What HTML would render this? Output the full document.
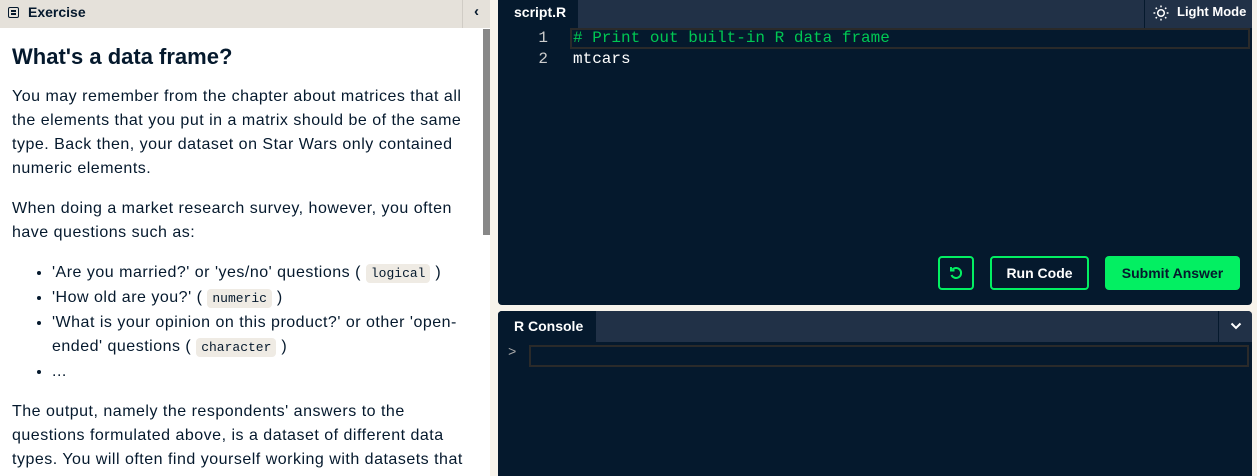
<!DOCTYPE html>
<html><head><meta charset="utf-8"><style>
*{box-sizing:border-box;margin:0;padding:0}
body{width:1257px;height:476px;overflow:hidden;background:#f7f3eb;font-family:"Liberation Sans",sans-serif;position:relative}
.left{position:absolute;left:0;top:0;width:490px;height:476px;background:#fff;overflow:hidden}
.lh{height:28px;background:#e5e1da;position:relative;font-weight:bold;font-size:14px;color:#05192d;line-height:24px}
.lh .t{position:absolute;left:28px;top:0}
.lh .ic{position:absolute;left:8px;top:7px;width:11px;height:11px;border:1.6px solid #05192d;border-radius:2px}
.lh .ic:before{content:"";position:absolute;left:2px;right:2px;top:2px;height:1.5px;background:#05192d}
.lh .ic:after{content:"";position:absolute;left:2px;right:2px;top:5px;height:1.5px;background:#05192d}
.lh .col{position:absolute;left:462px;top:0;width:28px;height:28px;border-left:1px solid #d0ccc5;text-align:center;font-size:15px}
.sb{position:absolute;left:483px;top:29px;width:7px;height:206px;background:#888}
.content{position:absolute;left:12px;top:41px;width:462px;color:#05192d;font-size:16px;line-height:24px;letter-spacing:0.5px}
h1{font-size:22px;line-height:32px;margin-bottom:12px;letter-spacing:0}
p{margin-bottom:16px}
ul{margin:0 0 16px 40px}
li{line-height:24px}
code{font-family:"Liberation Mono",monospace;font-size:13px;background:#efebe4;padding:2px 5px;border-radius:4px;letter-spacing:0}
.ed{position:absolute;left:498px;top:0;width:754px;height:305px;background:#05192d;border-radius:0 0 4px 4px;overflow:hidden}
.tabs{height:28px;background:#213147;position:relative;color:#fff;font-weight:bold;font-size:14px}
.tab{position:absolute;left:0;top:0;width:80px;height:28px;background:#05192d;padding-left:16px;line-height:24px}
.lm{position:absolute;right:0;top:0;width:108px;height:28px;border-left:1px solid #05192d;line-height:24px;font-size:13px;padding-left:32px}
.code{font-family:"Liberation Mono",monospace;font-size:16px;color:#fff;line-height:21px}
.ln{position:absolute;left:30px;top:28px;color:#ccc;text-align:right;width:20px;line-height:21px;font-family:"Liberation Mono",monospace;font-size:16px}
.hl{position:absolute;left:72px;top:28px;width:680px;height:21px;border:2px solid #2a2a2a}
.btn{position:absolute;top:256px;height:34px;border-radius:4px;font-weight:bold;font-size:14px;line-height:30px;text-align:center}
.con{position:absolute;left:498px;top:311px;width:754px;height:165px;background:#05192d;border-radius:4px 4px 0 0;overflow:hidden}
.ch{height:31px;background:#213147;position:relative;color:#fff;font-weight:bold;font-size:14px}
</style></head><body>
<div class="left">
 <div class="lh"><div class="ic"></div><span class="t">Exercise</span><div class="col">&#8249;</div></div>
 <div class="sb"></div>
 <div class="content">
  <h1>What's a data frame?</h1>
  <p>You may remember from the chapter about matrices that all the elements that you put in a matrix should be of the same type. Back then, your dataset on Star Wars only contained numeric elements.</p>
  <p>When doing a market research survey, however, you often have questions such as:</p>
  <ul>
   <li>'Are you married?' or 'yes/no' questions ( <code>logical</code> )</li>
   <li>'How old are you?' ( <code>numeric</code> )</li>
   <li>'What is your opinion on this product?' or other 'open-ended' questions ( <code>character</code> )</li>
   <li>...</li>
  </ul>
  <p>The output, namely the respondents' answers to the questions formulated above, is a dataset of different data types. You will often find yourself working with datasets that contain different data types instead of only one.</p>
 </div>
</div>
<div class="ed">
 <div class="tabs"><div class="tab">script.R</div><div class="lm"><svg style="position:absolute;left:8px;top:5px" width="16" height="16" viewBox="0 0 16 16" fill="none" stroke="#fff" stroke-width="1.5"><circle cx="8" cy="8" r="3.3"/><path d="M8 0.5v1.8M8 13.7v1.8M0.5 8h1.8M13.7 8h1.8M2.7 2.7l1.2 1.2M12.1 12.1l1.2 1.2M2.7 13.3l1.2-1.2M12.1 3.9l1.2-1.2"/></svg>Light Mode</div></div>
 <div class="ln">1<br>2</div>
 <div class="hl"></div>
 <div class="code" style="position:absolute;left:75px;top:28px"><span style="color:#00c853"># Print out built-in R data frame</span><br>mtcars</div>
 <div class="btn" style="left:440px;width:36px;border:2px solid #03ef62"><svg style="margin-top:7px" width="16" height="16" viewBox="0 0 16 16" fill="none" stroke="#03ef62" stroke-width="2"><path d="M4.5 4.5A5 5 0 1 1 3.5 10"/><path d="M3 2v3.5h3.5"/></svg></div>
 <div class="btn" style="left:492px;width:99px;border:2px solid #03ef62;color:#fff">Run Code</div>
 <div class="btn" style="left:607px;width:135px;background:#03ef62;color:#05192d;line-height:34px">Submit Answer</div>
</div>
<div class="con">
 <div class="ch"><div style="position:absolute;left:0;top:0;width:98px;height:31px;background:#05192d;padding-left:16px;line-height:30px">R Console</div>
 <div style="position:absolute;right:0;top:0;width:34px;height:31px;border-left:1px solid #05192d;text-align:center"><svg style="margin-top:10px" width="12" height="10" viewBox="0 0 12 10" fill="none" stroke="#fff" stroke-width="2"><path d="M1.5 2.5l4.5 4.5 4.5-4.5"/></svg></div></div>
 <div style="position:absolute;left:10px;top:34px;color:#aaa;font-family:'Liberation Mono',monospace;font-size:14px">&gt;</div>
 <div style="position:absolute;left:31px;top:34px;width:720px;height:22px;border:2px solid #2a2a2a"></div>
</div>
</body></html>
